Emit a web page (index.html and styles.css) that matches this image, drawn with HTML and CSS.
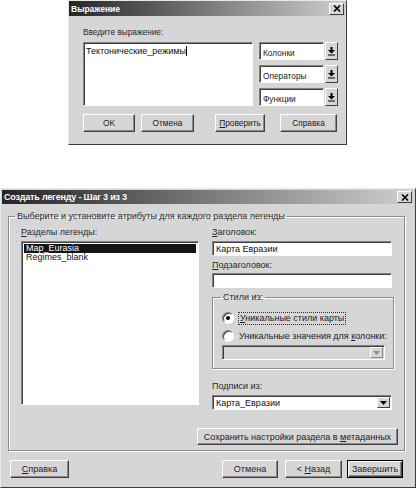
FILE: index.html
```html
<!DOCTYPE html>
<html>
<head>
  <title>Выражение / Создать легенду</title>
  <link rel="stylesheet" href="styles.css">
</head>

<body>
  <div class="expr-dialog">
    <div class="title-bar">
      <span class="title-text">Выражение</span>
      <span class="close-btn">
        <svg width="8" height="7" viewBox="0 0 8 7"><path d="M1 0.5L7 6.5M7 0.5L1 6.5" stroke="#000" stroke-width="1.6"/></svg>
      </span>
    </div>
    <div class="expr-body">
      <div class="label">Введите выражение:</div>
      <div class="expr-row">
        <div class="field expr-text">Тектонические_режимы<span class="caret"></span></div>
        <div class="expr-lists">
          <div class="old-combo">
            <span class="field old-combo-value">Колонки</span>
            <span class="old-combo-btn"><svg width="7" height="9" viewBox="0 0 7 9"><path d="M2.5 0h2v3h2.5L3.5 6.5 0 3h2.5z M0 7.5h7v1h-7z" fill="#000"/></svg></span>
          </div>
          <div class="old-combo">
            <span class="field old-combo-value">Операторы</span>
            <span class="old-combo-btn"><svg width="7" height="9" viewBox="0 0 7 9"><path d="M2.5 0h2v3h2.5L3.5 6.5 0 3h2.5z M0 7.5h7v1h-7z" fill="#000"/></svg></span>
          </div>
          <div class="old-combo">
            <span class="field old-combo-value">Функции</span>
            <span class="old-combo-btn"><svg width="7" height="9" viewBox="0 0 7 9"><path d="M2.5 0h2v3h2.5L3.5 6.5 0 3h2.5z M0 7.5h7v1h-7z" fill="#000"/></svg></span>
          </div>
        </div>
      </div>
      <div class="expr-buttons">
        <button class="btn btn-ok">OK</button>
        <button class="btn btn-cancel">Отмена</button>
        <button class="btn btn-check"><u>П</u>роверить</button>
        <button class="btn btn-help">Справка</button>
      </div>
    </div>
  </div>

  <div class="legend-dialog">
    <div class="title-bar legend-title">
      <span class="title-text">Создать легенду - Шаг 3 из 3</span>
      <span class="close-btn">
        <svg width="8" height="7" viewBox="0 0 8 7"><path d="M1 0.5L7 6.5M7 0.5L1 6.5" stroke="#000" stroke-width="1.6"/></svg>
      </span>
    </div>
    <div class="legend-body">
      <fieldset class="group main-group">
        <legend>Выберите и установите атрибуты для каждого раздела легенды</legend>
        <div class="columns">
          <div class="left-col">
            <div class="label"><u>Р</u>азделы легенды:</div>
            <div class="field list-box">
              <div class="list-item selected">Map_Eurasia</div>
              <div class="list-item">Regimes_blank</div>
            </div>
          </div>
          <div class="right-col">
            <div class="label"><u>З</u>аголовок:</div>
            <div class="field input">Карта Евразии</div>
            <div class="label label-gap"><u>П</u>одзаголовок:</div>
            <div class="field input input-sub"></div>

            <fieldset class="group styles-group">
              <legend>Стили из:</legend>
              <div class="radio-row">
                <span class="radio checked"></span>
                <span class="focus-text"><u>У</u>никальные стили карты</span>
              </div>
              <div class="radio-row">
                <span class="radio"></span>
                <span>Уникальные значения для <u>к</u>олонки:</span>
              </div>
              <div class="combo combo-disabled">
                <span class="combo-value"></span>
                <span class="combo-btn"><svg width="7" height="4" viewBox="0 0 7 4"><path d="M0 0h7L3.5 4z" fill="#909090"/></svg></span>
              </div>
            </fieldset>

            <div class="label labels-from">Подписи из:</div>
            <div class="combo labels-combo">
              <span class="combo-value">Карта_Евразии</span>
              <span class="combo-btn"><svg width="7" height="4" viewBox="0 0 7 4"><path d="M0 0h7L3.5 4z" fill="#000"/></svg></span>
            </div>
          </div>
        </div>
        <div class="save-row">
          <button class="btn btn-save">Сохранить настройки раздела в <u>м</u>етаданных</button>
        </div>
      </fieldset>

      <div class="wizard-buttons">
        <button class="btn btn-wiz-help"><u>С</u>правка</button>
        <button class="btn btn-wiz-cancel">Отмена</button>
        <button class="btn btn-back">&lt; <u>Н</u>азад</button>
        <button class="btn btn-finish">Завершить</button>
      </div>
    </div>
  </div>
</body>
</html>
```

FILE: styles.css
```css
body {
  margin: 0;
  width: 416px;
  height: 488px;
  overflow: hidden;
  background-color: #fff;
  font-family: "Liberation Sans", Arial, sans-serif;
  font-size: 9px;
  color: #1c1c1c;
}

u {
  text-decoration: underline;
  text-underline-offset: 1px;
}

/* shared window parts */

.title-bar {
  height: 15px;
  display: flex;
  align-items: center;
  justify-content: space-between;
  padding: 0 2px 0 2px;
  background: linear-gradient(to right, #262626, #cfcfcf);
  color: #fff;
  font-weight: bold;
  white-space: nowrap;
}

.close-btn {
  width: 13px;
  height: 10px;
  display: flex;
  align-items: center;
  justify-content: center;
  background-color: #d6d6d6;
  border: 1px solid;
  border-color: #fff #404040 #404040 #fff;
}

.label {
  line-height: 13px;
  color: #2a2a2a;
  white-space: nowrap;
}

.field {
  box-sizing: border-box;
  background-color: #fff;
  border: 1px solid;
  border-color: #808080 #fff #fff #808080;
  box-shadow: inset 1px 1px #404040;
}

.btn {
  box-sizing: border-box;
  height: 18px;
  padding: 0;
  font-family: inherit;
  font-size: inherit;
  color: #1c1c1c;
  white-space: nowrap;
  background-color: #d6d6d6;
  border: 1px solid;
  border-color: #fff #404040 #404040 #fff;
  box-shadow: inset -1px -1px #8a8a8a;
}

/* Выражение dialog */

.expr-dialog {
  box-sizing: border-box;
  width: 279px;
  height: 145px;
  margin-left: 68px;
  font-size: 8.3px;
  background-color: #d6d6d6;
  border: 1px solid;
  border-color: #e8e8e8 #3a3a3a #3a3a3a #e8e8e8;
}

.expr-dialog .title-text {
  font-size: 8.5px;
}

.expr-body {
  padding: 10px 8px 0 14px;
}

.expr-row {
  display: flex;
  gap: 6px;
  margin-top: 3px;
}

.expr-text {
  width: 170px;
  height: 64px;
  padding: 3px 2px;
  font-size: 9px;
  color: #111;
}

.caret {
  display: inline-block;
  width: 1px;
  height: 10px;
  background-color: #000;
  vertical-align: -2px;
}

.expr-lists {
  width: 79px;
  display: flex;
  flex-direction: column;
  gap: 5px;
}

.old-combo {
  height: 18px;
  display: flex;
  gap: 1px;
}

.old-combo-value {
  flex: 1;
  padding: 5px 3px 0;
  color: #222;
}

.old-combo-btn {
  width: 11px;
  display: flex;
  align-items: center;
  justify-content: center;
  background-color: #d6d6d6;
  border: 1px solid;
  border-color: #fff #404040 #404040 #fff;
}

.expr-buttons {
  display: flex;
  margin-top: 8px;
}

.btn-ok { width: 52px; }
.btn-cancel { width: 53px; margin-left: 6px; }
.btn-check { width: 50px; margin-left: 21px; }
.btn-help { width: 57px; margin-left: 15px; }

/* Создать легенду dialog */

.legend-dialog {
  box-sizing: border-box;
  width: 416px;
  height: 300px;
  margin-top: 43px;
  padding: 1px;
  background-color: #d6d6d6;
  border: 1px solid;
  border-color: #e8e8e8 #3a3a3a #3a3a3a #e8e8e8;
}

.legend-title {
  height: 14px;
  letter-spacing: -0.2px;
}

.legend-body {
  padding: 6px 9px 0 6px;
}

.group {
  margin: 0;
  border: 1px solid #8a8a8a;
  box-shadow: inset 1px 1px #fff, 1px 1px #fff;
}

.group legend {
  padding: 0 2px;
  margin-left: -6px;
  line-height: 12px;
  color: #2a2a2a;
}

.main-group {
  box-sizing: border-box;
  height: 241px;
  padding: 2px 6px 0 12px;
}

.columns {
  display: grid;
  grid-template-columns: 178px 180px;
  column-gap: 13px;
  margin-top: 2px;
}

.list-box {
  height: 164px;
  margin-top: 2px;
  padding: 2px;
}

.list-item {
  line-height: 9px;
  height: 9px;
  padding-left: 2px;
  color: #111;
}

.list-item.selected {
  background-color: #141414;
  color: #fff;
}

.input {
  height: 15px;
  margin-top: 2px;
  padding: 2px 3px 0;
  color: #111;
}

.label-gap {
  margin-top: 3px;
}

.input-sub {
  margin-top: 1px;
}

.styles-group {
  box-sizing: border-box;
  height: 78px;
  margin-top: 3px;
  padding: 7px 6px 0 8px;
}

.styles-group legend {
  margin-left: 0;
}

.radio-row {
  display: flex;
  align-items: center;
  gap: 5px;
  height: 16px;
  margin-left: 1px;
  white-space: nowrap;
}

.radio-row + .radio-row {
  margin-top: 2px;
}

.radio {
  box-sizing: border-box;
  width: 12px;
  height: 12px;
  flex: none;
  display: flex;
  align-items: center;
  justify-content: center;
  border-radius: 50%;
  background-color: #fff;
  border: 1px solid;
  border-color: #808080 #fff #fff #808080;
  box-shadow: inset 1px 1px #404040;
}

.radio.checked::after {
  content: '';
  width: 4px;
  height: 4px;
  border-radius: 50%;
  background-color: #000;
}

.focus-text {
  outline: 1px dotted #333;
  padding: 0 1px;
  line-height: 11px;
}

.combo {
  box-sizing: border-box;
  height: 15px;
  display: flex;
  background-color: #fff;
  border: 1px solid;
  border-color: #808080 #fff #fff #808080;
  box-shadow: inset 1px 1px #404040;
  padding: 1px 1px 1px 2px;
}

.combo-value {
  flex: 1;
  padding-left: 1px;
  line-height: 12px;
  color: #111;
}

.combo-btn {
  box-sizing: border-box;
  width: 13px;
  display: flex;
  align-items: center;
  justify-content: center;
  background-color: #d6d6d6;
  border: 1px solid;
  border-color: #fff #404040 #404040 #fff;
}

.combo-disabled {
  width: 163px;
  margin-top: 1px;
  margin-left: 1px;
  background-color: #d6d6d6;
}

.combo-disabled .combo-btn {
  border-color: #fff #8a8a8a #8a8a8a #fff;
}

.labels-from {
  margin-top: 11px;
}

.labels-combo {
  margin-top: 2px;
}

.save-row {
  display: flex;
  justify-content: flex-end;
  margin-top: 18px;
}

.btn-save {
  width: 201px;
  height: 17px;
}

.wizard-buttons {
  display: flex;
  margin-top: 9px;
  padding-right: 2px;
}

.btn-wiz-help { width: 59px; margin-left: 2px; }
.btn-wiz-cancel { width: 56px; margin-left: auto; }
.btn-back { width: 57px; margin-left: 7px; }

.btn-finish {
  width: 56px;
  margin-left: 5px;
  border: 1px solid #000;
  box-shadow: inset 1px 1px #fff, inset -1px -1px #404040, inset -2px -2px #8a8a8a;
}
```
